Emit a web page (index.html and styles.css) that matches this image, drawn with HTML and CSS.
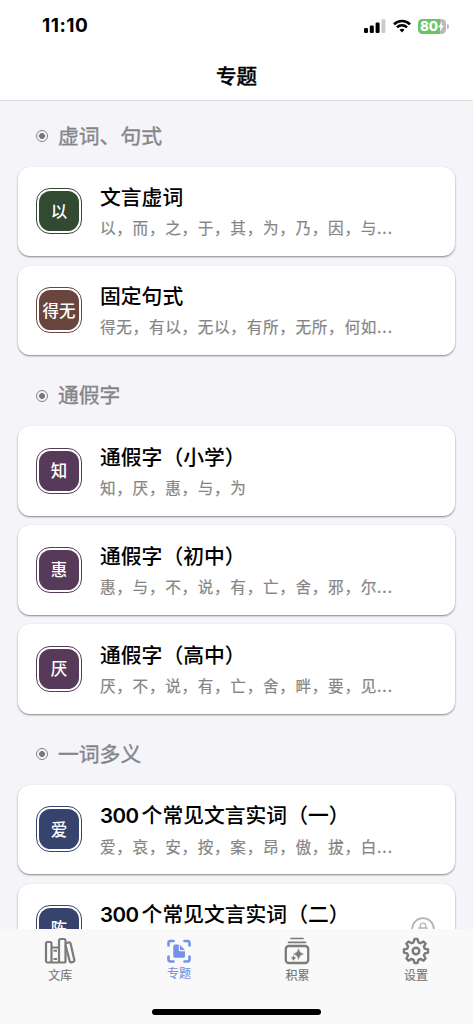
FILE: index.html
```html
<!DOCTYPE html>
<html lang="zh-CN">
<head>
<meta charset="utf-8">
<meta name="viewport" content="width=device-width, initial-scale=1">
<title>专题</title>
<link rel="stylesheet" href="styles.css">
</head>
<body>
<div class="app">
  <header class="header">
    <div class="status">
      <span class="time">11:10</span>
      <div class="indicators">
        <svg class="signal" width="22" height="14" viewBox="0 0 22 14"><rect x="0" y="9" width="4" height="5" rx="1.2"/><rect x="5.8" y="6.5" width="4" height="7.5" rx="1.2"/><rect x="11.6" y="3.5" width="4" height="10.5" rx="1.2"/><rect x="17.4" y="0.3" width="4" height="13.7" rx="1.2" fill="#cbcbcb"/></svg>
        <svg class="wifi" width="18" height="14" viewBox="0 0 18 14" fill="none" stroke="#000" stroke-width="2.5"><path d="M1 5.3C5.4.8 12.6.8 17 5.3"/><path d="M4 8.4c2.8-2.8 7.200-2.800 10 0"/><path d="M6.500 10.700c1.400-1.300 3.600-1.300 5 0L9 13.500z" fill="#000" stroke="none"/></svg>
        <div class="battery"><span>80</span><svg width="6" height="11" viewBox="0 0 6 11"><path d="M4.200.300.300 6.300h2.200l-.800 4.500L5.800 4.600H3.500z" fill="#fff"/></svg></div>
        <i class="nub"></i>
      </div>
    </div>
    <h1 class="title">专题</h1>
  </header>
  <main class="content">
    <h2 class="section"><i class="dot"></i><span>虚词、句式</span></h2>
    <div class="cards">
      <article class="card"><div class="badge green"><b>以</b></div><div class="text"><h3>文言虚词</h3><p>以，而，之，于，其，为，乃，因，与<span class="dots">...</span></p></div></article>
      <article class="card"><div class="badge brown"><b>得无</b></div><div class="text"><h3>固定句式</h3><p>得无，有以，无以，有所，无所，何如<span class="dots">...</span></p></div></article>
    </div>
    <h2 class="section"><i class="dot"></i><span>通假字</span></h2>
    <div class="cards">
      <article class="card"><div class="badge purple"><b>知</b></div><div class="text"><h3>通假字（小学）</h3><p>知，厌，惠，与，为</p></div></article>
      <article class="card"><div class="badge purple"><b>惠</b></div><div class="text"><h3>通假字（初中）</h3><p>惠，与，不，说，有，亡，舍，邪，尔<span class="dots">...</span></p></div></article>
      <article class="card"><div class="badge purple"><b>厌</b></div><div class="text"><h3>通假字（高中）</h3><p>厌，不，说，有，亡，舍，畔，要，见<span class="dots">...</span></p></div></article>
    </div>
    <h2 class="section"><i class="dot"></i><span>一词多义</span></h2>
    <div class="cards">
      <article class="card"><div class="badge blue"><b>爱</b></div><div class="text"><h3><span class="num">300</span>个常见文言实词（一）</h3><p>爱，哀，安，按，案，昂，傲，拔，白<span class="dots">...</span></p></div></article>
      <article class="card"><div class="badge blue"><b>陈</b></div><div class="text"><h3><span class="num">300</span>个常见文言实词（二）</h3></div>
        <svg class="lock" width="24" height="24" viewBox="0 0 24 24" fill="none" stroke="#b4b4b4"><circle cx="12" cy="12" r="10.800" stroke-width="1.800"/><path d="M9.300 11V8.800a2.700 2.700 0 0 1 5.400 0V11M8 11h8v6H8z" stroke-width="1.300"/></svg>
      </article>
    </div>
  </main>
  <nav class="tabs">
    <a class="tab"><svg width="32" height="28" viewBox="0 0 32 28" fill="none" stroke="#7b7b7b" stroke-width="2.2" stroke-linejoin="round"><rect x="2" y="5" width="5.500" height="20.500" rx="1.500"/><path d="M7.500 10.500h7.500M7.500 25.500H15M9.500 13.800h3.500M9.500 22h3.500" stroke-width="1.900"/><rect x="15" y="2" width="6.500" height="23.500" rx="1.500"/><path d="m21.500 6.500 3.600-1.200q1.100-.200 1.400 1l3.900 17q.200 1.200-.900 1.500l-2.300.600q-1.100.200-1.400-.900L21.500 8"/></svg><span>文库</span></a>
    <a class="tab active"><svg width="28" height="28" viewBox="0 0 28 28"><path d="M3.500 8.500V6q0-2 2-2h3M19.500 4h3q2 0 2 2v2.500M24.500 19.500v3q0 2-2 2h-3M8.500 24.500h-3q-2 0-2-2v-3" fill="none" stroke="#7692e6" stroke-width="2.600" stroke-linecap="round"/><path d="M9.800 7.500h4v5.500q0 1.200 1.200 1.200h5v5q0 1.500-1.500 1.500h-8.700q-1.500 0-1.500-1.500V9q0-1.500 1.500-1.500zM14.900 7.700l5 5.300h-5z" fill="#7692e6"/></svg><span>专题</span></a>
    <a class="tab"><svg width="28" height="28" viewBox="0 0 28 28" fill="none" stroke="#7b7b7b" stroke-width="2"><path d="M8 1.500h12M5.500 5.300h17" stroke-width="1.700" stroke-linecap="round"/><rect x="2.800" y="9" width="22.400" height="17" rx="3" stroke-width="2.300"/><path d="M15.500 11.500q.700 4.700 5 5.500-4.300.800-5 5.500-.700-4.700-5-5.500 4.300-.800 5-5.500zM10.500 18.500q.400 2 2.300 2.500-1.900.500-2.300 2.500-.400-2-2.300-2.500 1.900-.500 2.300-2.500z" fill="#7b7b7b" stroke="#7b7b7b" stroke-width=".4"/></svg><span>积累</span></a>
    <a class="tab"><svg width="28" height="28" viewBox="0 0 28 28" fill="none" stroke="#7b7b7b" stroke-width="2.400" stroke-linejoin="round"><path d="M11.600 5.300 12.500 2h3l.900 3.300 2.100.9 3-1.700 2.100 2.100-1.700 3 .9 2.100 3.200.800v3l-3.200.9-.9 2.100 1.700 3-2.100 2.100-3-1.700-2.100.9-.9 3.200h-3l-.9-3.200-2.100-.9-3 1.700-2.100-2.100 1.700-3-.9-2.100L2 15.500v-3l3.200-.8.9-2.100-1.700-3 2.100-2.100 3 1.700z"/><circle cx="14" cy="14" r="3.300"/></svg><span>设置</span></a>
    <i class="home"></i>
  </nav>
</div>
</body>
</html>
```
FILE: styles.css
```css
* { box-sizing: border-box; }
body { margin: 0; font-family: Inter, "Noto Sans CJK SC", sans-serif; background: #f4f4f9; }
h1, h2, h3, p { margin: 0; font-family: "Noto Sans CJK SC", sans-serif; }
.app { height: 1024px; display: flex; flex-direction: column; overflow: hidden; }
.header { flex: none; height: 101px; background: #fff; border-bottom: 1px solid #dedee0; }
.status { height: 52px; display: flex; justify-content: space-between; padding: 0 24px 0 42px; align-items: center; }
.time { font-size: 19px; font-weight: 700; line-height: 20px; letter-spacing: 0.5px; }
.indicators { display: flex; align-items: center; }
.wifi { margin-left: 7px; }
.battery { margin-left: 7px; width: 28px; height: 15px; border-radius: 4.500px; background: linear-gradient(90deg, #68c466 80%, #b9b9b9 80%); display: flex; align-items: center; justify-content: center; color: #fff; font-size: 13.500px; font-weight: 800; line-height: 15px; letter-spacing: -0.200px; }
.nub { width: 2px; height: 5px; margin-left: 1px; border-radius: 0 2px 2px 0; background: #bbb; }
.title { text-align: center; font-size: 20.500px; line-height: 46px; font-weight: 500; -webkit-text-stroke: 0.350px #000; }
.content { flex: 1; min-height: 0; overflow: hidden; padding: 0 18px; }
.section { height: 71px; display: flex; align-items: center; padding: 10px 0 0 18px; font-size: 20.800px; line-height: 31px; font-weight: 400; color: #858588; -webkit-text-stroke: 0.350px #858588; }
.section:first-child { height: 65.500px; padding-top: 5px; }
.section span { padding-bottom: 2px; }
.dot { width: 12px; height: 12px; border: 1.200px solid #858588; border-radius: 50%; margin-right: 10px; background: radial-gradient(circle, #77777a 2.600px, transparent 3.200px); }
.cards { display: flex; flex-direction: column; gap: 9.500px; }
.card { flex: none; height: 89.500px; display: flex; padding: 0 20px 0 18px; align-items: center; border-radius: 12px; background: #fff; box-shadow: 0 1px 2px rgba(0, 0, 0, .45); }
.badge { flex: none; width: 46px; height: 46px; border: 1px solid; border-radius: 14px; padding: 2px; }
.badge b { display: flex; align-items: center; justify-content: center; height: 100%; padding-bottom: 1px; border-radius: 11.500px; background: var(--tone); color: #fff; font: 500 16.500px/1 "Noto Sans CJK SC", sans-serif; white-space: nowrap; }
.green { --tone: #324932; border-color: #324932; }
.brown { --tone: #69453d; border-color: #69453d; }
.purple { --tone: #573a59; border-color: #573a59; }
.blue { --tone: #35436d; border-color: #35436d; }
.text { margin-left: 18px; height: 89.500px; padding-top: 14.500px; flex: 1; white-space: nowrap; }
h3 { font-size: 20.800px; line-height: 31px; font-weight: 500; }
.text p { font-size: 15.600px; line-height: 31px; letter-spacing: 0.700px; color: #858585; -webkit-text-stroke: 0.200px #858585; }
.num { font-family: Inter, sans-serif; font-weight: 600; font-size: 20.500px; margin-right: 3px; letter-spacing: -0.500px; }
.dots { letter-spacing: 1px; }
.lock { flex: none; margin-top: 2px; }
.tabs { position: relative; flex: none; height: 95px; background: #f9f9f9; display: flex; padding-left: 1px; }
.tab { flex: none; width: 118.600px; height: 55px; padding-top: 8px; display: flex; flex-direction: column; align-items: center; color: #777; font-size: 12px; line-height: 17px; -webkit-text-stroke: 0.150px; }
.tab svg { height: 28px; }
.tab span { margin-top: 2px; }
.tab.active { color: #7692e6; }
.tab.active span { margin-top: 0; }
.home { position: absolute; left: 152px; bottom: 9px; width: 169px; height: 6px; border-radius: 3px; background: #000; }
```
